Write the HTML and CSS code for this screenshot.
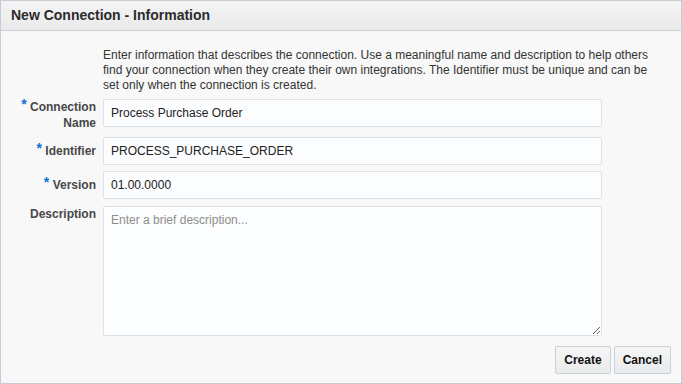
FILE: index.html
```html
<html lang="en">
	<head>
		<meta charset="UTF-8" />
		<meta name="viewport" content="width=device-width, initial-scale=1.0" />
		<title>New Connection - Information</title>
		<link rel="stylesheet" href="styles.css">
	</head>
	<body>
		<div class="dialog">
			<div class="dialog-header">New Connection - Information</div>

			<div class="dialog-body">
				<div class="form-grid">
					<div></div>
					<p class="intro">Enter information that describes the connection. Use a meaningful name and description to help others<br />find your connection when they create their own integrations. The Identifier must be unique and can be<br />set only when the connection is created.</p>

					<label class="field-label wrap" for="conn_name"><span class="req">*</span> Connection Name</label>
					<input class="field-input" type="text" id="conn_name" value="Process Purchase Order" />

					<label class="field-label" for="conn_id"><span class="req">*</span> Identifier</label>
					<input class="field-input" type="text" id="conn_id" value="PROCESS_PURCHASE_ORDER" />

					<label class="field-label" for="conn_ver"><span class="req">*</span> Version</label>
					<input class="field-input" type="text" id="conn_ver" value="01.00.0000" />

					<label class="field-label top" for="conn_desc">Description</label>
					<textarea class="field-input field-area" id="conn_desc" placeholder="Enter a brief description..."></textarea>
				</div>

				<div class="dialog-buttons">
					<div class="button">Create</div>
					<div class="button">Cancel</div>
				</div>
			</div>
		</div>
	</body>
</html>
```

FILE: styles.css
```css
* {
	margin: 0;
	padding: 0;
	box-sizing: border-box;
}

body {
	font-family: "Liberation Sans", Arial, sans-serif;
	font-size: 12px;
	color: #333;
	background-color: #f8f8f8;
}

.dialog {
	width: 682px;
	height: 384px;
	border: 1px solid #c5ced7;
	background-color: #f8f8f8;
	display: flex;
	flex-direction: column;
}

.dialog-header {
	height: 30px;
	padding: 0 10px;
	line-height: 29px;
	font-size: 14px;
	font-weight: bold;
	color: #2b2b2b;
	background: linear-gradient(#f4f4f4, #eaeaea);
	border-bottom: 1px solid #c9d2da;
}

.dialog-body {
	flex: 1;
	padding: 17px 10px 10px 10px;
	display: flex;
	flex-direction: column;
}

.form-grid {
	display: grid;
	grid-template-columns: 85px 499px;
	column-gap: 7px;
	row-gap: 6px;
	align-items: start;
}

.intro {
	width: 568px;
	line-height: 15px;
	color: #333;
}

.field-label {
	padding-top: 6px;
	text-align: right;
	font-weight: bold;
	color: #474747;
	line-height: 15.5px;
}

.field-label.wrap {
	padding-top: 0;
}

.field-label.top {
	padding-top: 1px;
	margin-top: 1px;
}

.req {
	color: #0572ce;
	font-size: 14px;
	position: relative;
	top: -2px;
}

.field-input {
	height: 28px;
	padding: 0 7px;
	font-family: "Liberation Sans", Arial, sans-serif;
	font-size: 12px;
	color: #222;
	background-color: #fcfdfe;
	border: 1px solid #dde2e6;
	border-radius: 2px;
	outline: none;
}

.field-area {
	height: 130px;
	margin-top: 1px;
	padding: 6px 7px;
	resize: both;
}

.field-area::placeholder {
	color: #8d8d8d;
}

.dialog-buttons {
	margin-top: 10px;
	display: flex;
	justify-content: flex-end;
	gap: 3px;
}

.button {
	height: 28px;
	padding: 0 8px;
	line-height: 26px;
	font-weight: bold;
	color: #111;
	background: linear-gradient(#f6f6f6, #e9eaeb);
	border: 1px solid #c9d0d6;
	border-radius: 2px;
	cursor: pointer;
}
```
